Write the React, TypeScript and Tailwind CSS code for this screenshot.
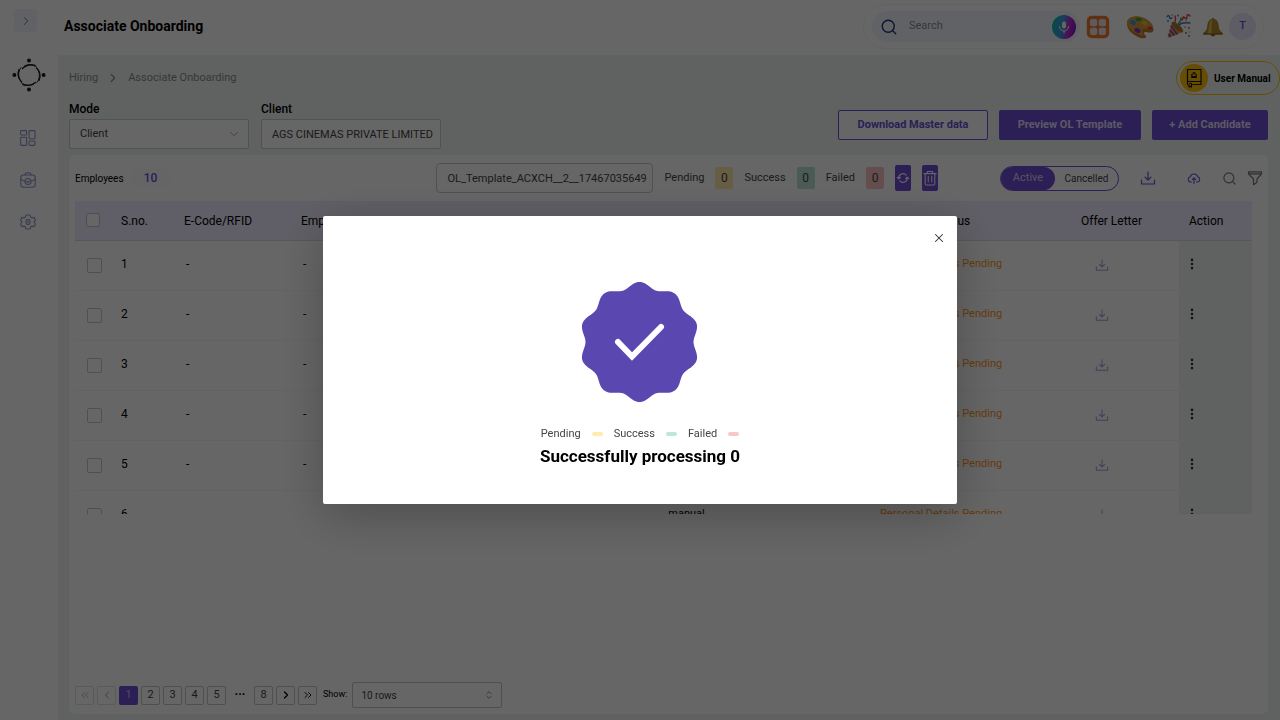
import React from "react";
import { Search, X, ChevronDown, ChevronRight, ChevronLeft, ChevronsLeft, ChevronsRight, ChevronsUpDown, MoreVertical } from "lucide-react";

type IconProps = { className?: string };

function DownloadIcon({ className }: IconProps) {
  return (
    <svg viewBox="0 0 16 16" className={className} fill="none" stroke="currentColor" strokeWidth="1.2" strokeLinecap="round" strokeLinejoin="round" aria-hidden="true">
      <path d="M1.5 10v4h13v-4M8 2v8M5 7.2 8 10.2l3-3" />
    </svg>
  );
}

function CloudUploadIcon({ className }: IconProps) {
  return (
    <svg viewBox="0 0 16 16" className={className} fill="none" stroke="currentColor" strokeWidth="1.2" strokeLinecap="round" strokeLinejoin="round" aria-hidden="true">
      <path d="M5 12.5H4A3 3 0 0 1 3.7 6.6a4.4 4.4 0 0 1 8.5 0A3 3 0 0 1 12 12.5h-1M8 14.5V8M6 9.8 8 7.8l2 2" />
    </svg>
  );
}

function FilterIcon({ className }: IconProps) {
  return (
    <svg viewBox="0 0 16 16" className={className} fill="none" stroke="currentColor" strokeWidth="1.2" strokeLinejoin="round" aria-hidden="true">
      <path d="M1.5 1.8h13v2L10 9v3.3l-3.5 2.4V9L1.5 3.8zM1.5 3.8h13" />
    </svg>
  );
}

function RefreshIcon({ className }: IconProps) {
  return (
    <svg viewBox="0 0 16 16" className={className} fill="none" stroke="currentColor" strokeWidth="1.3" strokeLinecap="round" strokeLinejoin="round" aria-hidden="true">
      <path d="M3.2 8.5A4.8 4.8 0 0 1 11.6 4.8M12.8 7.5A4.8 4.8 0 0 1 4.4 11.2M1.4 7.2l1.8 1.8 1.8-1.8M11 8.8l1.8-1.8 1.8 1.8" />
    </svg>
  );
}

function TrashIcon({ className }: IconProps) {
  return (
    <svg viewBox="0 0 16 18" className={className} fill="none" stroke="currentColor" strokeWidth="1.2" strokeLinecap="round" strokeLinejoin="round" aria-hidden="true">
      <path d="M1 4h14M5 4V1.500h6V4M2.500 4v11.700q0 1.300 1.300 1.300h8.400q1.300 0 1.300-1.300V4M6 7v6.500M10 7v6.500" />
    </svg>
  );
}

function LogoIcon() {
  return (
    <svg viewBox="0 0 34 34" className="size-[34px] text-[#1c1c1c]" aria-hidden="true">
      <g fill="currentColor">
        <circle cx="17" cy="2.6" r="2" />
        <circle cx="17" cy="31.4" r="2" />
        <circle cx="2.4" cy="17" r="2" />
        <circle cx="31.6" cy="17" r="2" />
      </g>
      <g fill="none" stroke="currentColor" strokeLinecap="round">
        <path strokeWidth="1.4" d="M10.5 10.5Q16 5 23 7.5M24.5 10Q30 15 27 22.5M23.5 24.5Q18 29 11 26.5M9.5 24Q4.500 18 7 11.500" />
        <path strokeWidth=".8" d="M12.500 7.800Q19 5 24.500 9M26.500 12.500Q29 19 25 24.500M21.500 26.500Q15 29 9.500 25M7.500 21.500Q5 15 9 9.500" />
      </g>
    </svg>
  );
}

function DashboardIcon() {
  return (
    <svg viewBox="0 0 16 16" className="size-4" fill="none" stroke="currentColor" strokeWidth="1.1" aria-hidden="true">
      <rect x=".6" y=".6" width="6" height="4.400" rx=".8" />
      <rect x=".6" y="7.200" width="6" height="8.200" rx=".8" />
      <rect x="9" y=".6" width="6" height="8.200" rx=".8" />
      <rect x="9" y="11" width="6" height="4.400" rx=".8" />
    </svg>
  );
}

function BriefcaseIcon() {
  return (
    <svg viewBox="0 0 16 16" className="size-4" fill="none" stroke="currentColor" strokeWidth="1.1" strokeLinecap="round" strokeLinejoin="round" aria-hidden="true">
      <rect x=".8" y="3" width="14.400" height="12.200" rx="2.600" />
      <path d="M5 3Q5 .7 7 .7h2q2 0 2 2.300M1 7.500l3.800 1.800M15 7.500l-3.800 1.800" />
      <circle cx="8" cy="9.500" r="3" />
      <path d="m6.800 9.500.9.900 1.600-1.600" />
    </svg>
  );
}

function GearIcon() {
  return (
    <svg viewBox="0 0 16 16" className="size-4" fill="none" stroke="currentColor" strokeWidth="1.1" strokeLinejoin="round" aria-hidden="true">
      <path d="M6 1h4l.6 2 1.600.9 2-.5 1.300 2.600-1.200 1.300v1.400l1.200 1.300-1.300 2.600-2-.5-1.600.9-.6 2H6l-.6-2-1.600-.9-2 .5L.5 10l1.200-1.300V7.300L.5 6l1.300-2.600 2 .5 1.600-.9z" />
      <rect x="6" y="5.500" width="4" height="5" rx="1.500" />
      <path d="M8 5.500v5M6 8h4" strokeWidth=".6" />
    </svg>
  );
}

function MicIcon() {
  return (
    <svg viewBox="0 0 24 24" className="size-6" aria-hidden="true">
      <defs>
        <linearGradient id="mic" x1="0" x2="1" y1=".2" y2=".4">
          <stop offset="0" stopColor="#0abfae" />
          <stop offset=".45" stopColor="#3a9ddb" />
          <stop offset=".78" stopColor="#c21fd0" />
          <stop offset="1" stopColor="#7a1bc4" />
        </linearGradient>
      </defs>
      <circle cx="12" cy="12" r="12" fill="url(#mic)" />
      <rect x="10" y="6.500" width="4" height="7" rx="2" fill="#fff" />
      <path d="M7.500 11.500a4.500 4.500 0 0 0 9 0M12 16v2" fill="none" stroke="#fff" strokeWidth="1" strokeLinecap="round" />
    </svg>
  );
}

function AppsIcon() {
  return (
    <svg viewBox="0 0 24 24" className="size-6" aria-hidden="true">
      <rect x=".8" y=".8" width="22.400" height="22.400" rx="5" fill="#f07a2c" />
      <g fill="#e9e4ec">
        <rect x="4" y="4" width="7.200" height="7.200" rx="2" />
        <rect x="12.800" y="4" width="7.200" height="7.200" rx="2" />
        <rect x="4" y="12.800" width="7.200" height="7.200" rx="2" />
        <rect x="12.800" y="12.800" width="7.200" height="7.200" rx="2" />
      </g>
    </svg>
  );
}

function PaletteIcon() {
  return (
    <svg viewBox="0 0 28 24" className="h-6 w-7" aria-hidden="true">
      <path d="M1 9C1 3 6 1 12 1.500c8 .7 15 7 15.500 12.500.2 3-2 4-4.500 3.500-2.500-.6-5-1-5 1 0 1.800 3 2 2 3.800-1 1.400-5 .9-8-.4C6 19.500 1 14 1 9z" fill="#c07a2c" />
      <path d="M1 8C1 3 6 1 12 1.500c8 .7 14.500 6 15.200 11-1.500 2.500-4 1.500-6.500 1-3-.5-5 1-4.500 3.500.3 1.500 2 2.600.8 3.500C8 19 1 13 1 8z" fill="#dc9a42" />
      <ellipse cx="12.500" cy="4.500" rx="3" ry="1.900" fill="#38a832" />
      <ellipse cx="7" cy="7.500" rx="3" ry="2.200" fill="#2f9fd8" transform="rotate(35 7 7.500)" />
      <ellipse cx="18.500" cy="8" rx="3" ry="2" fill="#e7c227" transform="rotate(25 18.500 8)" />
      <ellipse cx="11.500" cy="15.500" rx="3.200" ry="2.300" fill="#7d3bb8" transform="rotate(30 11.500 15.500)" />
      <ellipse cx="24" cy="13" rx="2" ry="1.500" fill="#d83a3a" />
    </svg>
  );
}

function PartyIcon() {
  return (
    <svg viewBox="0 0 25 25" className="size-[25px]" aria-hidden="true">
      <path d="M6 8 17 18 1.500 24z" fill="#dda33c" />
      <ellipse cx="11.500" cy="13" rx="7.400" ry="2.600" fill="#b5762a" transform="rotate(42 11.500 13)" />
      <path d="m4.800 11.500 6.500 9M3.500 16l5 5.500M2.400 20l2.500 3" stroke="#8a45c4" strokeWidth="1.700" />
      <g fill="none" strokeWidth="1.400" strokeLinecap="round">
        <path d="M1 2.500q2-2 2.500.5t2.500 1M13 11q3-3 11-2" stroke="#3c78d8" />
        <path d="M9 8q1-3 0-6M15 5.500q2 .5 2-1.500t2 0 2-1.500 3-.5" stroke="#d83c5c" />
        <path d="M12 10q3-2 3-6" stroke="#3fa54a" />
      </g>
      <g fill="#d83c5c">
        <circle cx="23" cy="14" r=".9" /><circle cx="12" cy="1.500" r=".9" /><circle cx="20" cy="19" r=".9" />
      </g>
      <g fill="#3c78d8">
        <circle cx="2" cy="7" r=".9" /><circle cx="23" cy="22" r=".9" /><circle cx="6" cy="1" r=".7" />
      </g>
      <g fill="#e0b030">
        <circle cx="20" cy="6.500" r=".9" /><circle cx="19" cy="13" r=".9" /><circle cx="23.500" cy="18" r=".8" />
      </g>
    </svg>
  );
}

function BellIcon() {
  return (
    <svg viewBox="0 0 20 20" className="size-5" aria-hidden="true">
      <circle cx="10" cy="17" r="2.400" fill="#8a5a1c" />
      <path d="M8.600 2Q10-.4 11.400 2q3.800 1 4.300 6.500.3 4.500 2.300 6 2 1.500 1.800 3H.2q-.2-1.500 1.800-3 2-1.500 2.300-6Q4.800 3 8.600 2z" fill="#b58c2c" />
      <path d="M8 3.500Q6 5.500 6 10t-2 6.500h4.500Q8 8 9.500 3z" fill="#dcbc60" />
      <path d="M1 15.500q9 2 18 0l.8 2H.2z" fill="#94691f" />
    </svg>
  );
}

function ManualIcon() {
  return (
    <svg viewBox="0 0 28 28" className="size-7 shrink-0" aria-hidden="true">
      <circle cx="14" cy="14" r="14" fill="#ffc107" />
      <g fill="none" stroke="#1a1a1a" strokeWidth="1.200" strokeLinejoin="round">
        <path d="M7.500 20.500V5.500H21v15H12.500M7.500 17.500H21M7.500 17.500q-.5 3.500 1.500 3.500v2l1.200-.8 1.300.8v-3.500H9" />
        <path d="M11 13.500h6M12 12.500q-1-2.500 1-2.500 0-1.500 1-1.500t1 1.500q2 0 1 2.500z" />
      </g>
    </svg>
  );
}

function SuccessSeal() {
  const points = Array.from({ length: 241 }, (_, i) => {
    const angle = (i / 240) * Math.PI * 2;
    const r = 57 + 3 * Math.cos(10 * angle);
    return `${(59.5 + r * Math.sin(angle)).toFixed(2)},${(60 - r * Math.cos(angle)).toFixed(2)}`;
  }).join(" ");
  return (
    <svg viewBox="0 0 120 120" className="size-[120px]" aria-hidden="true">
      <polygon points={points} fill="#5b47b0" />
      <path d="M38 60 52 74.500 81 45" fill="none" stroke="#fff" strokeWidth="6" strokeLinecap="round" />
    </svg>
  );
}

function Sidebar() {
  return (
    <aside className="flex w-[58px] shrink-0 flex-col items-center bg-white">
      <button aria-label="Expand menu" className="mt-[9px] mr-[7px] flex size-[23px] items-center justify-center rounded-sm bg-[#f1f4ff] text-[#6b6b75]">
        <ChevronRight className="size-3.5" strokeWidth={1.5} />
      </button>
      <a href="#home" aria-label="Home" className="mt-[26px]"><LogoIcon /></a>
      <nav className="mt-[38px] flex flex-col gap-[26px] pr-[3px] text-[#8f96c8]">
        <a href="#dashboard" aria-label="Dashboard"><DashboardIcon /></a>
        <a href="#hiring" aria-label="Hiring"><BriefcaseIcon /></a>
        <a href="#settings" aria-label="Settings"><GearIcon /></a>
      </nav>
    </aside>
  );
}

function Header() {
  return (
    <header className="flex h-[55px] items-center justify-between bg-white pr-4 pb-0.5 pl-1.5">
      <h1 className="text-[14px] font-bold">Associate Onboarding</h1>
      <div className="flex h-[45px] w-[401px] items-center rounded-full border border-[#f5f5f7] pl-2">
        <div className="flex h-[31px] w-[208px] items-center rounded-full bg-[#f3f5ff] pr-1 pl-2">
          <Search className="size-[18px] text-[#2a2f7a]" strokeWidth={1.8} />
          <input aria-label="Search" placeholder="Search" className="ml-[11px] w-0 grow bg-transparent text-[11px] outline-none placeholder:text-[#8a8a8a]" />
          <button aria-label="Voice search"><MicIcon /></button>
        </div>
        <button aria-label="Apps" className="ml-1.5"><AppsIcon /></button>
        <button aria-label="Theme" className="ml-4"><PaletteIcon /></button>
        <button aria-label="Celebrations" className="ml-3"><PartyIcon /></button>
        <button aria-label="Notifications" className="ml-3"><BellIcon /></button>
        <button className="ml-1.5 size-[27px] rounded-full bg-[#ebe7fc] text-[11px] font-medium text-[#6b4fd0]">T</button>
      </div>
    </header>
  );
}

function Toolbar() {
  const statuses = [
    { label: "Pending", tone: "bg-[#ffe9a8]" },
    { label: "Success", tone: "bg-[#b9e4d6]" },
    { label: "Failed", tone: "bg-[#f8c4c0]" },
  ];
  return (
    <div className="flex h-[30px] items-center">
      <span className="text-[10px]">Employees</span>
      <span className="ml-1.5 w-[42px] rounded-full bg-[#fdfcff] text-center text-[12px] leading-5 font-medium text-[#6a4fe0]">10</span>
      <input aria-label="Template" readOnly defaultValue="OL_Template_ACXCH__2__17467035649" className="ml-auto h-[30px] w-[217px] rounded-sm border border-[#c8c8c8] bg-white pl-2.5 text-[11px] text-[#444]" />
      {statuses.map((s) => (
        <span key={s.label} className="ml-[11px] flex items-center gap-[11px] text-[11px] text-[#444]">
          {s.label}
          <span className={`h-[22px] w-[18px] rounded-xs text-center text-[12px] leading-[22px] ${s.tone}`}>0</span>
        </span>
      ))}
      <button aria-label="Refresh" className="ml-[11px] flex h-[26px] w-4 items-center justify-center rounded-xs bg-[#6c4fd6] text-white"><RefreshIcon className="size-3.5" /></button>
      <button aria-label="Delete" className="ml-[11px] flex h-[26px] w-4 items-center justify-center rounded-xs bg-[#6c4fd6] text-white"><TrashIcon className="h-4 w-3.5" /></button>
      <div className="ml-[62px] flex h-[25px] w-[119px] rounded-full border border-[#6c4fd6]">
        <button className="w-[54px] rounded-full bg-[#6c4fd6] text-[11px] text-[#d8d2f5]">Active</button>
        <button className="grow text-[10px] text-[#444]">Cancelled</button>
      </div>
      <button aria-label="Download" className="ml-[21px] text-[#6c4fd6]"><DownloadIcon className="size-4" /></button>
      <button aria-label="Upload" className="ml-[31px] text-[#6c4fd6]"><CloudUploadIcon className="size-3.5" /></button>
      <button aria-label="Search employees" className="ml-[21px] text-[#777]"><Search className="size-[15px]" strokeWidth={1.8} /></button>
      <button aria-label="Filter" className="ml-2.5 text-[#777]"><FilterIcon className="size-4" /></button>
    </div>
  );
}

function EmployeeTable() {
  return (
    <div className="mt-2 mr-[11px] h-[313px] overflow-hidden">
      <table className="w-full table-fixed text-left text-[12px]">
        <colgroup>
          <col className="w-[37px]" /><col className="w-[63px]" /><col className="w-[117px]" /><col className="w-[141px]" /><col className="w-[84px]" />
          <col /><col className="w-[200px]" /><col className="w-[123px]" /><col className="w-[73px]" />
        </colgroup>
        <thead>
          <tr className="h-[39px] border-b border-[#dcd8e6] bg-[#f0ecff]">
            <th className="pl-[11px]"><input type="checkbox" aria-label="Select all" className="block size-[14px] appearance-none rounded-xs border border-[#c4c4cc] bg-white" /></th>
            <th className="pt-0.5 pl-[9px] font-normal">S.no.</th>
            <th className="pt-0.5 pl-[9px] font-normal">E-Code/RFID</th>
            <th className="pt-0.5 pl-[9px] font-normal">Emp Name</th>
            <th className="pt-0.5 pl-[9px] font-normal">Group</th>
            <th className="pt-0.5 text-center font-normal">Source</th>
            <th className="pt-0.5 pl-[80px] font-normal">Status</th>
            <th className="pt-0.5 pl-[25px] font-normal">Offer Letter</th>
            <th className="pt-0.5 pl-[10px] font-normal">Action</th>
          </tr>
        </thead>
        <tbody>
          {[1, 2, 3, 4, 5, 6, 7, 8, 9, 10].map((n) => (
            <tr key={n} className="h-[50px] border-b border-[#f6f6f6]">
              <td className="pl-3"><input type="checkbox" aria-label={`Select row ${n}`} className="block size-[15px] appearance-none rounded-xs border border-[#c9c9d2] bg-white" /></td>
              <td className="pb-0.5 pl-[9px]">{n}</td>
              <td className="pb-0.5 pl-[11px]">-</td>
              <td className="pb-0.5 pl-[11px]">-</td>
              <td className="pb-0.5 pl-[11px]">-</td>
              <td className="pb-0.5 text-center text-[11px]">manual</td>
              <td className="pb-0.5 pl-6 text-[11px] whitespace-nowrap text-[#ff9320]">Personal Details Pending</td>
              <td className="pl-[39px]"><button aria-label="Download offer letter" className="block text-[#a99be0]"><DownloadIcon className="size-3.5" /></button></td>
              <td className="bg-[#edf5f2] pb-0.5 pl-[6px]"><button aria-label="Row actions" className="block text-[#333]"><MoreVertical className="size-3.5" strokeWidth={2.5} /></button></td>
            </tr>
          ))}
        </tbody>
      </table>
    </div>
  );
}

function Pagination() {
  const box = "flex size-[19px] items-center justify-center rounded-xs border border-[#c5c5cd]";
  return (
    <div className="mt-auto flex items-center text-[11px] text-[#444]">
      <div className="flex items-center gap-[3px]">
        <button aria-label="First page" disabled className={`${box} opacity-50`}><ChevronsLeft className="size-3" strokeWidth={1.5} /></button>
        <button aria-label="Previous page" disabled className={`${box} opacity-50`}><ChevronLeft className="size-3" strokeWidth={2} /></button>
        <button className="size-[19px] rounded-xs bg-[#6c4fd6] text-[#c9bdf5]">1</button>
        {[2, 3, 4, 5].map((n) => <button key={n} className={box}>{n}</button>)}
        <span className="w-[22px] text-center text-[12px] font-bold text-black">···</span>
        <button className={box}>8</button>
        <button aria-label="Next page" className={`${box} text-black`}><ChevronRight className="size-3" strokeWidth={2.5} /></button>
        <button aria-label="Last page" className={`${box} text-black`}><ChevronsRight className="size-3" strokeWidth={1.8} /></button>
      </div>
      <label htmlFor="rows" className="ml-1.5 text-[9px] text-black">Show:</label>
      <div className="relative ml-[5px]">
        <select id="rows" className="h-[26px] w-[150px] appearance-none rounded-xs border border-[#c5c5cd] bg-white pl-2 text-[10px]"><option>10 rows</option></select>
        <ChevronsUpDown className="pointer-events-none absolute top-2 right-2 size-2.5 text-[#777]" />
      </div>
    </div>
  );
}

function SuccessDialog() {
  const legend = [
    { label: "Pending", tone: "bg-[#ffebb0]" },
    { label: "Success", tone: "bg-[#bfe6da]" },
    { label: "Failed", tone: "bg-[#f8c8c6]" },
  ];
  return (
    <div className="fixed inset-0 z-20 flex items-center justify-center bg-black/60">
      <div role="dialog" aria-modal="true" aria-labelledby="dialog-title" className="relative flex h-[288px] w-[634px] flex-col items-center rounded-xs bg-white pt-[66px] shadow-[0_12px_48px_rgba(0,0,0,0.25)]">
        <button aria-label="Close" className="absolute top-[15px] right-[11px] text-[#333]"><X className="size-3.5" strokeWidth={1.8} /></button>
        <SuccessSeal />
        <div className="mt-6 flex h-4 items-center gap-[11px] text-[11px] text-[#444]">
          {legend.map((l) => (
            <span key={l.label} className="flex items-center gap-[11px]">{l.label}<span className={`h-1 w-[11px] rounded-xs ${l.tone}`} /></span>
          ))}
        </div>
        <h2 id="dialog-title" className="mt-0.5 text-[17px] leading-6 font-bold">Successfully processing 0</h2>
      </div>
    </div>
  );
}

export default function App() {
  return (
    <div className="flex min-h-screen bg-white font-['Roboto',sans-serif] text-black">
      <Sidebar />
      <div className="flex min-w-0 grow flex-col">
        <Header />
        <main className="relative flex grow flex-col bg-[#edf5f2] pr-3 pb-1.5 pl-[11px] [&_select]:text-[#444]">
          <nav aria-label="Breadcrumb" className="mt-[15px] flex h-4 items-center text-[11px] text-[#8b8b8b]">
            <a href="#hiring">Hiring</a>
            <ChevronRight className="mx-2 size-3.5" strokeWidth={2} />
            <span>Associate Onboarding</span>
          </nav>
          <a href="#manual" className="absolute top-1.5 right-0 flex h-[34px] w-[104px] items-center gap-1.5 rounded-full border border-[#ffc107] pl-[3px] text-[10px] font-bold whitespace-nowrap">
            <ManualIcon />User Manual
          </a>
          <div className="mt-[15px] flex gap-3 text-[11px]">
            <div className="w-[180px]">
              <label htmlFor="mode" className="block h-[18px] text-[12px] leading-4 font-medium">Mode</label>
              <div className="relative">
                <select id="mode" className="h-[30px] w-full appearance-none rounded-xs border border-[#c5cccb] bg-white pl-2.5"><option>Client</option></select>
                <ChevronDown className="pointer-events-none absolute top-2 right-2 size-3.5 text-[#999]" strokeWidth={1.5} />
              </div>
            </div>
            <div className="w-[180px]">
              <label htmlFor="client" className="block h-[18px] text-[12px] leading-4 font-medium">Client</label>
              <input id="client" readOnly defaultValue="AGS CINEMAS PRIVATE LIMITED" className="h-[30px] w-full rounded-xs border border-[#c5cccb] bg-white pl-2.5 text-[#444]" />
            </div>
            <div className="mt-[9px] ml-auto flex h-[30px] gap-[11px] font-bold">
              <button className="w-[150px] rounded-xs border border-[#6c4fd6] bg-white text-[#6c4fd6]">Download Master data</button>
              <button className="w-[142px] rounded-xs bg-[#6c4fd6] text-[#e4dff8]">Preview OL Template</button>
              <button className="w-[116px] rounded-xs bg-[#6c4fd6] text-[#e4dff8]">+ Add Candidate</button>
            </div>
          </div>
          <section className="mt-1.5 flex grow flex-col rounded-md bg-white pt-2 pr-[5px] pb-1.5 pl-1.5">
            <Toolbar />
            <EmployeeTable />
            <Pagination />
          </section>
        </main>
      </div>
      <SuccessDialog />
    </div>
  );
}
